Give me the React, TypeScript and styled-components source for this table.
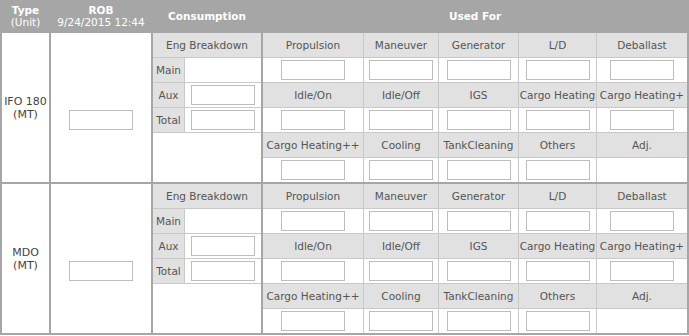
import React from 'react'
import styled, { createGlobalStyle } from 'styled-components'

const GlobalStyle = createGlobalStyle`
  body {
    margin: 0;
    background: #ffffff;
    font-family: "DejaVu Sans", Verdana, sans-serif;
    font-size: 10.5px;
    color: #555555;
  }
`

const LINE = '#a6a6a6'
const THIN = '#c9c9c9'
const SHADE = '#e1e1e1'

const Sheet = styled.div`
  display: grid;
  grid-template-columns: 47px 100px 108px 424px;
  grid-template-rows: 31px 149px 149px;
  gap: 2px;
  padding: 0 2px 2px 2px;
  width: 689px;
  box-sizing: border-box;
  background: ${LINE};
`

const HeadCell = styled.div`
  display: flex;
  flex-direction: column;
  align-items: center;
  justify-content: center;
  color: #ffffff;
  line-height: 12px;
  white-space: nowrap;
`

const HeadTitle = styled.span`
  font-weight: bold;
`

const TypeCell = styled.div`
  display: flex;
  flex-direction: column;
  align-items: center;
  justify-content: center;
  background: #ffffff;
  color: #444444;
  font-size: 11px;
  line-height: 13px;
`

const RobCell = styled.div`
  display: flex;
  align-items: center;
  justify-content: center;
  padding-top: 24px;
  background: #ffffff;
`

const Field = styled.input`
  box-sizing: border-box;
  width: 64px;
  height: 20px;
  margin: 0;
  padding: 0 2px;
  border: 1px solid #bdbdbd;
  background: #ffffff;
  outline: none;
`

const EngPanel = styled.div`
  display: grid;
  grid-template-columns: 31px 76px;
  grid-template-rows: 24px 24px 24px 24px 1fr;
  gap: 1px;
  background: ${THIN};
`

const UsedPanel = styled.div`
  display: grid;
  grid-template-columns: 100px 74px 79px 77px 90px;
  grid-auto-rows: 24px;
  gap: 1px;
  background: ${THIN};
`

const Label = styled.div<{ $span?: number }>`
  grid-column: span ${p => p.$span ?? 1};
  display: flex;
  align-items: center;
  justify-content: center;
  background: ${SHADE};
  white-space: nowrap;
  overflow: hidden;
`

const Slot = styled.div<{ $span?: number }>`
  grid-column: span ${p => p.$span ?? 1};
  display: flex;
  align-items: center;
  justify-content: center;
  background: #ffffff;
`

const usedRows: { label: string; input: boolean }[][] = [
  ['Propulsion', 'Maneuver', 'Generator', 'L/D', 'Deballast'].map(l => ({ label: l, input: true })),
  ['Idle/On', 'Idle/Off', 'IGS', 'Cargo Heating', 'Cargo Heating+'].map(l => ({ label: l, input: true })),
  [
    { label: 'Cargo Heating++', input: true },
    { label: 'Cooling', input: true },
    { label: 'TankCleaning', input: true },
    { label: 'Others', input: true },
    { label: 'Adj.', input: false },
  ],
]

const fuels = [
  { name: 'IFO 180', unit: '(MT)' },
  { name: 'MDO', unit: '(MT)' },
]

const FuelRow: React.FC<{ name: string; unit: string }> = ({ name, unit }) => (
  <>
    <TypeCell>
      <span>{name}</span>
      <span>{unit}</span>
    </TypeCell>
    <RobCell>
      <Field />
    </RobCell>
    <EngPanel>
      <Label $span={2}>Eng Breakdown</Label>
      <Label>Main</Label>
      <Slot />
      <Label>Aux</Label>
      <Slot><Field /></Slot>
      <Label>Total</Label>
      <Slot><Field /></Slot>
      <Slot $span={2} />
    </EngPanel>
    <UsedPanel>
      {usedRows.map((row, i) => (
        <React.Fragment key={i}>
          {row.map(c => <Label key={c.label}>{c.label}</Label>)}
          {row.map(c => <Slot key={c.label}>{c.input && <Field />}</Slot>)}
        </React.Fragment>
      ))}
    </UsedPanel>
  </>
)

const App: React.FC = () => (
  <>
    <GlobalStyle />
    <Sheet>
      <HeadCell>
        <HeadTitle>Type</HeadTitle>
        <span>(Unit)</span>
      </HeadCell>
      <HeadCell>
        <HeadTitle>ROB</HeadTitle>
        <span>9/24/2015 12:44</span>
      </HeadCell>
      <HeadCell>
        <HeadTitle>Consumption</HeadTitle>
      </HeadCell>
      <HeadCell>
        <HeadTitle>Used For</HeadTitle>
      </HeadCell>
      {fuels.map(f => <FuelRow key={f.name} {...f} />)}
    </Sheet>
  </>
)

export default App
